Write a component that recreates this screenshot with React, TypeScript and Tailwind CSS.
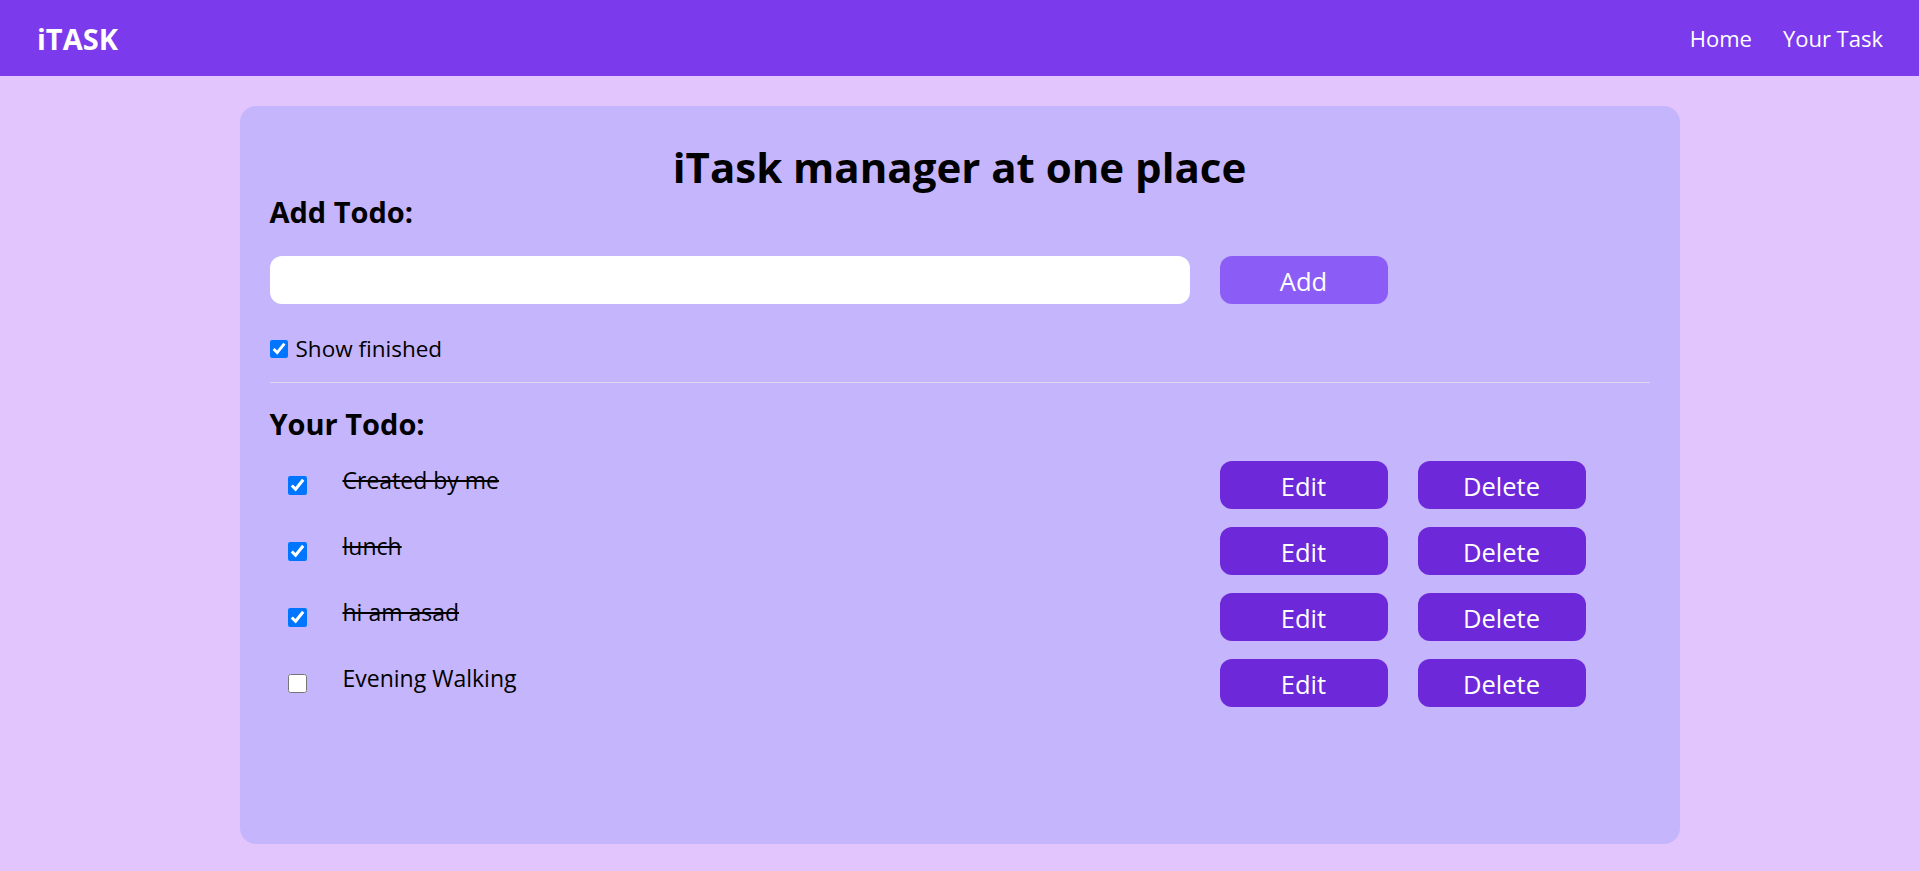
import { useState } from "react";

type Todo = { id: number; todo: string; isCompleted: boolean };

const initialTodos: Todo[] = [
  { id: 1, todo: "Created by me", isCompleted: true },
  { id: 2, todo: "lunch", isCompleted: true },
  { id: 3, todo: "hi am asad", isCompleted: true },
  { id: 4, todo: "Evening Walking", isCompleted: false },
];

function Navbar() {
  return (
    <nav className="flex h-[76px] items-center justify-between bg-[#7c3aed] pl-[37px] pr-[36px] text-white">
      <span className="text-[29px] font-bold leading-none">iTASK</span>
      <ul className="flex gap-[31px] text-[22px]">
        <li className="cursor-pointer">Home</li>
        <li className="cursor-pointer">Your Task</li>
      </ul>
    </nav>
  );
}

export default function App() {
  const [todo, setTodo] = useState("");
  const [todos, setTodos] = useState<Todo[]>(initialTodos);
  const [showFinished, setShowFinished] = useState(true);

  const toggle = (id: number) =>
    setTodos(todos.map((t) => (t.id === id ? { ...t, isCompleted: !t.isCompleted } : t)));

  const handleAdd = () => {
    if (!todo.trim()) return;
    setTodos([...todos, { id: Date.now(), todo, isCompleted: false }]);
    setTodo("");
  };

  const handleEdit = (id: number) => {
    const t = todos.find((i) => i.id === id);
    if (!t) return;
    setTodo(t.todo);
    setTodos(todos.filter((i) => i.id !== id));
  };

  const handleDelete = (id: number) => setTodos(todos.filter((i) => i.id !== id));

  return (
    <div className="min-h-screen bg-[#e2c5fc] font-['Open_Sans',sans-serif] text-black">
      <Navbar />
      <main className="mx-auto mt-[30px] h-[738px] w-[1440px] rounded-[16px] bg-[#c4b5fd] px-[30px] pt-[36px]">
        <h1 className="text-center text-[42px] font-bold leading-[50px]">iTask manager at one place</h1>

        <h2 className="mt-[2px] text-[29px] font-bold leading-[36px]">Add Todo:</h2>
        <div className="mt-[26px] flex gap-[30px]">
          <input
            type="text"
            value={todo}
            onChange={(e) => setTodo(e.target.value)}
            className="h-[48px] w-[920px] rounded-[12px] bg-white px-4 text-[22px] outline-none"
          />
          <button
            type="button"
            onClick={handleAdd}
            className="h-[48px] w-[168px] rounded-[12px] bg-[#8b5cf6] pt-[2px] text-[25.5px] text-white"
          >
            Add
          </button>
        </div>

        <label className="mt-[30px] flex h-[30px] items-center gap-[8px] text-[22.5px]">
          <input
            type="checkbox"
            checked={showFinished}
            onChange={() => setShowFinished(!showFinished)}
            className="h-[18px] w-[18px]"
          />
          Show finished
        </label>

        <hr className="mt-[18px] border-[#ddd8ef]" />

        <h2 className="mt-[23px] text-[29px] font-bold leading-[36px]">Your Todo:</h2>

        <div className="mt-[19px] flex flex-col gap-[18px]">
          {todos
            .filter((t) => showFinished || !t.isCompleted)
            .map((t) => (
              <div key={t.id} className="flex h-[48px] gap-[30px]">
                <div className="flex w-[920px] items-start">
                  <input
                    type="checkbox"
                    checked={t.isCompleted}
                    onChange={() => toggle(t.id)}
                    className="ml-[18px] mt-[15px] h-[19px] w-[19px]"
                  />
                  <span className={`ml-[36px] mt-[3px] text-[23px] leading-[32px] ${t.isCompleted ? "line-through" : ""}`}>
                    {t.todo}
                  </span>
                </div>
                <button
                  type="button"
                  onClick={() => handleEdit(t.id)}
                  className="h-[48px] w-[168px] rounded-[12px] bg-[#6d28d9] pt-[2px] text-[25.5px] text-white"
                >
                  Edit
                </button>
                <button
                  type="button"
                  onClick={() => handleDelete(t.id)}
                  className="h-[48px] w-[168px] rounded-[12px] bg-[#6d28d9] pt-[2px] text-[25.5px] text-white"
                >
                  Delete
                </button>
              </div>
            ))}
        </div>
      </main>
    </div>
  );
}
